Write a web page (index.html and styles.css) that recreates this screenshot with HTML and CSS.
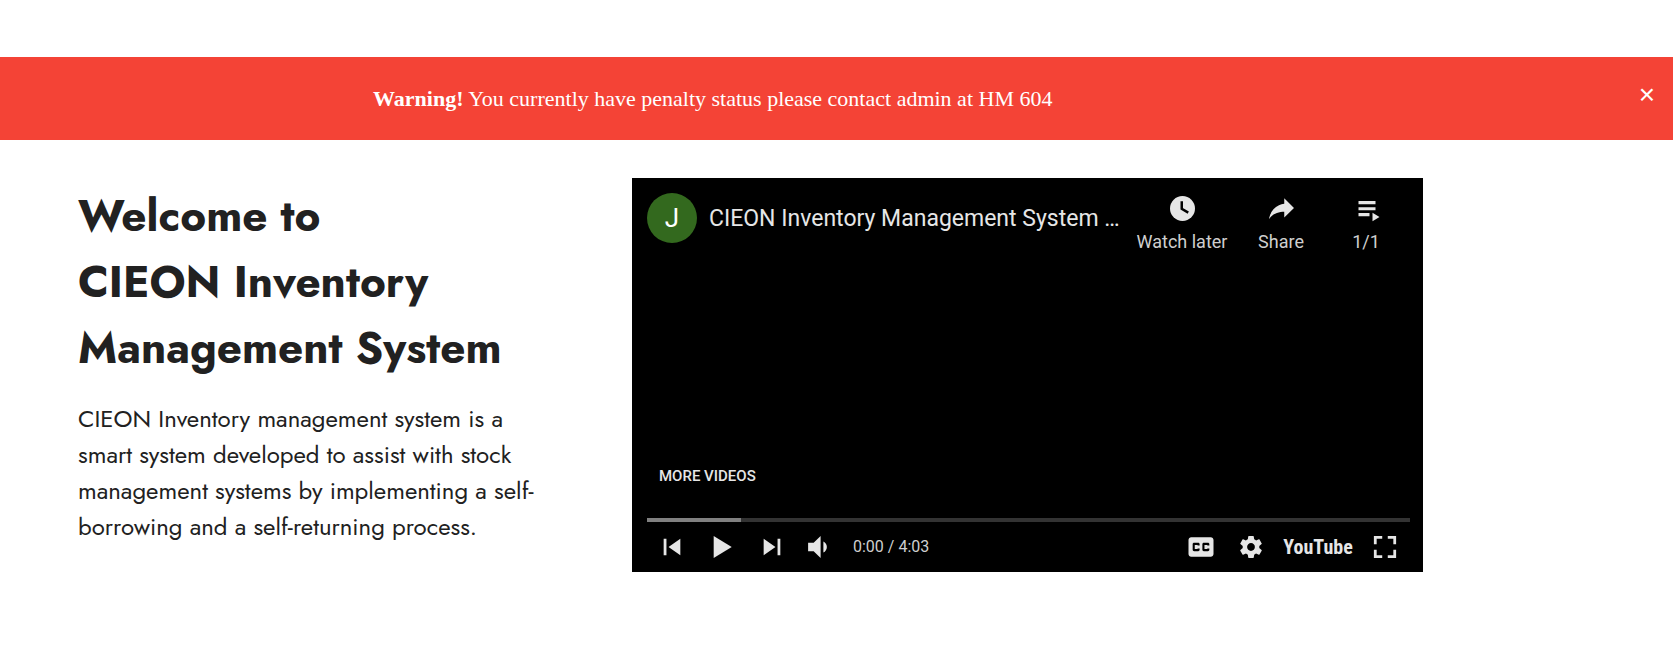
FILE: index.html
```html
<!DOCTYPE html>
<html lang="en">
<head>
<meta charset="utf-8">
<title>CIEON Inventory Management System</title>
<link rel="stylesheet" href="styles.css">
</head>
<body>
<div class="alert" role="alert">
  <p class="alert-text"><strong>Warning!</strong> You currently have penalty status please contact admin at HM 604</p>
  <button class="alert-close" type="button" aria-label="Close">×</button>
</div>
<main class="hero">
  <section class="intro">
    <h1>Welcome to<br>CIEON Inventory<br>Management System</h1>
    <p>CIEON Inventory management system is a<br>smart system developed to assist with stock<br>management systems by implementing a self-<br>borrowing and a self-returning process.</p>
  </section>
  <section class="player" aria-label="Video player">
    <header class="player-top">
      <a class="avatar" href="#" aria-label="Channel">J</a>
      <a class="title" href="#">CIEON Inventory Management System …</a>
      <button class="top-button later" type="button">
        <svg viewBox="0 0 36 36" aria-hidden="true"><circle cx="18" cy="18" r="10"/><path class="hands" d="M17.4 12.2V18.3L22.6 21.3"/></svg>
        <span>Watch later</span>
      </button>
      <button class="top-button share" type="button">
        <svg viewBox="0 0 36 36" aria-hidden="true"><path d="m 20.20,14.19 0,-4.45 7.79,7.79 -7.79,7.62 0,-4.56 C 16.27,20.69 12.10,21.81 9.34,24.76 8.80,25.13 7.60,27.29 8.12,25.65 9.08,21.32 11.80,17.18 15.98,15.38 c 1.33,-0.60 2.76,-0.98 4.21,-1.19 z"/></svg>
        <span>Share</span>
      </button>
      <button class="top-button list" type="button">
        <svg viewBox="0 0 36 36" aria-hidden="true"><path d="M11.6 12h13.6v2.5H11.6zM11.6 16.9h13.6v2.5H11.6zM11.6 21.6h8.8v2.5h-8.8zM22.8 21.4v6.8l5.6-3.4z"/></svg>
        <span>1/1</span>
      </button>
    </header>
    <div class="player-bottom">
      <p class="more">MORE VIDEOS</p>
      <input class="seek" type="range" min="0" max="243" value="0" aria-label="Seek">
      <div class="controls">
        <button class="control" type="button" aria-label="Previous"><svg viewBox="0 0 36 36"><path d="m 12,12 h 2 v 12 h -2 z m 3.5,6 8.5,6 V 12 z"/></svg></button>
        <button class="control" type="button" aria-label="Play"><svg viewBox="0 0 36 36"><path d="M12 10V26L25 18z"/></svg></button>
        <button class="control" type="button" aria-label="Next"><svg viewBox="0 0 36 36"><path d="M 12,24 20.5,18 12,12 V 24 z M 22,12 v 12 h 2 V 12 h -2 z"/></svg></button>
        <button class="control" type="button" aria-label="Mute"><svg viewBox="0 0 36 36"><path d="M8,21 L12,21 L17,26 L17,10 L12,15 L8,15 L8,21 Z M19,14 L19,22 C20.48,21.32 21.5,19.77 21.5,18 C21.5,16.26 20.48,14.74 19,14 Z"/></svg></button>
        <span class="time">0:00 / 4:03</span>
        <button class="control" type="button" aria-label="Subtitles"><svg viewBox="0 0 36 36"><path fill-rule="evenodd" d="M11,11 C9.89,11 9,11.9 9,13 L9,23 C9,24.1 9.89,25 11,25 L25,25 C26.1,25 27,24.1 27,23 L27,13 C27,11.9 26.1,11 25,11 L11,11 Z M17,17 L15.5,17 L15.5,16.5 L13.5,16.5 L13.5,19.5 L15.5,19.5 L15.5,19 L17,19 L17,20 C17,20.55 16.55,21 16,21 L13,21 C12.45,21 12,20.55 12,20 L12,16 C12,15.45 12.45,15 13,15 L16,15 C16.55,15 17,15.45 17,16 L17,17 Z M24,17 L22.5,17 L22.5,16.5 L20.5,16.5 L20.5,19.5 L22.5,19.5 L22.5,19 L24,19 L24,20 C24,20.55 23.55,21 23,21 L20,21 C19.45,21 19,20.55 19,20 L19,16 C19,15.45 19.45,15 20,15 L23,15 C23.55,15 24,15.45 24,16 L24,17 Z"/></svg></button>
        <button class="control" type="button" aria-label="Settings"><svg viewBox="0 0 36 36"><path fill-rule="evenodd" d="m 23.94,18.78 c .03,-0.25 .05,-0.51 .05,-0.78 0,-0.27 -0.02,-0.52 -0.05,-0.78 l 1.68,-1.32 c .15,-0.12 .19,-0.33 .09,-0.51 l -1.6,-2.76 c -0.09,-0.17 -0.31,-0.24 -0.48,-0.17 l -1.99,.8 c -0.41,-0.32 -0.86,-0.58 -1.35,-0.78 l -0.30,-2.12 c -0.02,-0.19 -0.19,-0.33 -0.39,-0.33 l -3.2,0 c -0.2,0 -0.36,.14 -0.39,.33 l -0.30,2.12 c -0.48,.2 -0.93,.47 -1.35,.78 l -1.99,-0.8 c -0.18,-0.07 -0.39,0 -0.48,.17 l -1.6,2.76 c -0.10,.17 -0.05,.39 .09,.51 l 1.68,1.32 c -0.03,.25 -0.05,.52 -0.05,.78 0,.26 .02,.52 .05,.78 l -1.68,1.32 c -0.15,.12 -0.19,.33 -0.09,.51 l 1.6,2.76 c .09,.17 .31,.24 .48,.17 l 1.99,-0.8 c .41,.32 .86,.58 1.35,.78 l .30,2.12 c .02,.19 .19,.33 .39,.33 l 3.2,0 c .2,0 .36,-0.14 .39,-0.33 l .30,-2.12 c .48,-0.2 .93,-0.47 1.35,-0.78 l 1.99,.8 c .18,.07 .39,0 .48,-0.17 l 1.6,-2.76 c .09,-0.17 .05,-0.39 -0.09,-0.51 l -1.68,-1.32 0,0 z m -5.94,2.01 c -1.54,0 -2.8,-1.25 -2.8,-2.8 0,-1.54 1.25,-2.8 2.8,-2.8 1.54,0 2.8,1.25 2.8,2.8 0,1.54 -1.25,2.8 -2.8,2.8 l 0,0 z"/></svg></button>
        <a class="wordmark" href="#">YouTube</a>
        <button class="control" type="button" aria-label="Full screen"><svg viewBox="0 0 36 36"><path d="M10 16h2v-4h4v-2h-6zM20 10v2h4v4h2v-6zM24 24h-4v2h6v-6h-2zM12 20h-2v6h6v-2h-4z"/></svg></button>
      </div>
    </div>
  </section>
</main>
</body>
</html>
```

FILE: styles.css
```css
* {
  box-sizing: border-box;
}

body {
  margin: 0;
  padding-top: 57px;
  background: #fff;
  color: #212121;
  font-family: Jost, Lato, sans-serif;
}

h1,
p {
  margin: 0;
}

button {
  padding: 0;
  border: 0;
  background: none;
  color: inherit;
  font: inherit;
  cursor: pointer;
}

a {
  color: inherit;
  text-decoration: none;
}

.alert {
  display: flex;
  justify-content: space-between;
  padding: 20px 15px 20px 373px;
  background: #f44336;
  color: #fff;
}

.alert-text {
  font: 22px/43px "Liberation Serif", serif;
}

.alert-close {
  width: 22px;
  font: 28px/36px "Liberation Sans", sans-serif;
  align-self: flex-start;
}

.hero {
  display: grid;
  grid-template-columns: 554fr 791fr;
  padding: 38px 250px 0 78px;
}

.intro {
  padding-top: 5px;
}

.intro h1 {
  margin-bottom: 20px;
  font-size: 44px;
  font-weight: 700;
  line-height: 66px;
}

.intro p {
  font-size: 24px;
  line-height: 36px;
}

.player {
  display: flex;
  flex-direction: column;
  justify-content: space-between;
  aspect-ratio: 791 / 394;
  background: #000;
  color: #e6e6e6;
  font-family: Roboto, sans-serif;
}

.player svg {
  display: block;
  fill: currentColor;
}

.player-top {
  display: flex;
  align-items: flex-start;
  padding: 8px 17px 0 15px;
}

.avatar {
  flex: none;
  width: 50px;
  margin-top: 7px;
  border-radius: 50%;
  background: #33691e;
  color: #fff;
  font-size: 26px;
  line-height: 50px;
  text-align: center;
}

.title {
  flex: 1;
  min-width: 0;
  padding-left: 12px;
  margin-top: 7px;
  overflow: hidden;
  font-size: 23px;
  line-height: 52px;
  white-space: nowrap;
}

.top-button {
  display: flex;
  flex: none;
  flex-direction: column;
  align-items: center;
  font-size: 18px;
  line-height: 22px;
}

.top-button span {
  color: #cfcfcf;
}

.top-button svg {
  width: 45px;
  height: 45px;
}

.hands {
  fill: none;
  stroke: #000;
  stroke-width: 2;
}

.later {
  width: 108px;
}

.share {
  width: 90px;
}

.list {
  width: 80px;
}

.player-bottom {
  padding: 0 13px 0 15px;
}

.more {
  padding-left: 12px;
  margin-bottom: 32px;
  font-size: 15px;
  font-weight: 500;
  line-height: 20px;
}

.seek {
  display: block;
  width: 100%;
  height: 4px;
  margin: 0;
  appearance: none;
  background: linear-gradient(90deg, #808080 94px, #333 94px);
}

.seek::-webkit-slider-thumb {
  width: 0;
  height: 0;
  appearance: none;
}

.controls {
  display: flex;
  align-items: center;
}

.control {
  flex: none;
  width: 50px;
}

.control svg {
  width: 50px;
  height: 50px;
}

.time {
  flex: 1;
  padding: 0 0 2px 6px;
  color: #cfcfcf;
  font-size: 16px;
}

.wordmark {
  width: 84px;
  font-family: "Roboto Condensed", Roboto, sans-serif;
  font-size: 20px;
  font-weight: 700;
  text-align: center;
}
```
